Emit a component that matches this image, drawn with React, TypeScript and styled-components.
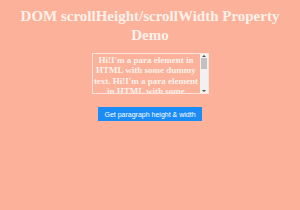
import React from 'react'
import styled, { createGlobalStyle } from 'styled-components'

const GlobalStyle = createGlobalStyle`
  html, body {
    margin: 0;
    padding: 0;
    background: #fcb19b;
  }
`

const Page = styled.div`
  width: 300px;
  height: 210px;
  display: flex;
  flex-direction: column;
  align-items: center;
  padding-top: 7px;
  box-sizing: border-box;
  font-family: 'Liberation Serif', 'Times New Roman', serif;
`

const Title = styled.h1`
  margin: 0;
  width: 270px;
  text-align: center;
  font-size: 15px;
  line-height: 19px;
  font-weight: bold;
  color: #fdf1ea;
`

const ScrollBox = styled.div`
  margin-top: 8px;
  width: 117px;
  height: 41px;
  box-sizing: border-box;
  border: 1px solid #fde3d9;
  display: flex;
`

const Para = styled.p`
  margin: 0;
  flex: 1;
  overflow: hidden;
  text-align: center;
  font-size: 9px;
  line-height: 10.4px;
  font-weight: bold;
  color: #fdf1ea;
  padding: 1px 0 0;
`

const Scrollbar = styled.div`
  width: 8px;
  display: flex;
  flex-direction: column;
  align-items: center;
  background: #f1f1f1;
`

const Arrow = styled.div<{ $down?: boolean }>`
  height: 4px;
  width: 8px;
  display: flex;
  align-items: center;
  justify-content: center;
  &::after {
    content: '';
    border-left: 2px solid transparent;
    border-right: 2px solid transparent;
    ${(p) => (p.$down ? 'border-top' : 'border-bottom')}: 2px solid #505050;
  }
`

const Thumb = styled.div`
  width: 6px;
  height: 11px;
  background: #c1c1c1;
`

const Track = styled.div`
  flex: 1;
`

const Button = styled.button`
  margin-top: 13px;
  width: 104px;
  height: 14px;
  border: none;
  padding: 0;
  background: #1b8cf5;
  color: #ffffff;
  font-family: 'Liberation Sans', Arial, sans-serif;
  font-size: 7px;
`

export default function App() {
  return (
    <>
      <GlobalStyle />
      <Page>
        <Title>DOM scrollHeight/scrollWidth Property Demo</Title>
        <ScrollBox>
          <Para>
            Hi!I'm a para element in HTML with some dummy text. Hi!I'm a para
            element in HTML with some dummy text. Hi!I'm a para element in HTML
            with some dummy text.
          </Para>
          <Scrollbar>
            <Arrow />
            <Thumb />
            <Track />
            <Arrow $down />
          </Scrollbar>
        </ScrollBox>
        <Button>Get paragraph height &amp; width</Button>
      </Page>
    </>
  )
}
